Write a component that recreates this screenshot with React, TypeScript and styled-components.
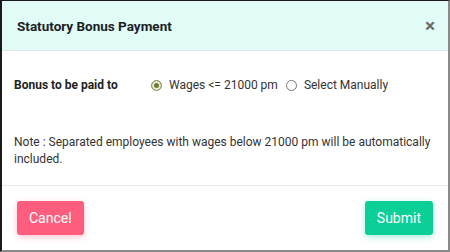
import styled, { createGlobalStyle } from "styled-components";

const GlobalStyle = createGlobalStyle`
  html, body {
    margin: 0;
    padding: 0;
    background: #fff;
  }
  body {
    font-family: Roboto, "Liberation Sans", sans-serif;
  }
`;

const Modal = styled.div`
  width: 450px;
  height: 252px;
  box-sizing: border-box;
  border-top: 1px solid #1a1a1a;
  border-left: 2px solid #1a1a1a;
  border-right: 2px solid #8a8a8a;
  border-bottom: 2px solid #8a8a8a;
  display: flex;
  flex-direction: column;
  background: #fff;
`;

const Header = styled.div`
  height: 50px;
  box-sizing: border-box;
  background: #e1fbf7;
  border-bottom: 1px solid #e3e6e8;
  display: flex;
  align-items: center;
  justify-content: space-between;
  padding: 0 13px 0 15px;
`;

const Title = styled.h4`
  margin: 0;
  font-size: 13.5px;
  font-weight: 700;
  color: #1c2126;
`;

const Close = styled.span`
  font-size: 19px;
  font-weight: 700;
  color: #6c6c6c;
  line-height: 1;
`;

const Body = styled.div`
  flex: 1;
  padding: 25px 12px 0;
  border-bottom: 1px solid #e6e8ea;
  color: #333;
  font-size: 12px;
`;

const Row = styled.div`
  display: flex;
  align-items: center;
  height: 18px;
`;

const Label = styled.span`
  width: 137px;
  font-weight: 700;
  color: #222;
`;

const Option = styled.label`
  display: flex;
  align-items: center;
  gap: 7px;
  margin-right: 8px;
  color: #333;
`;

const RadioDot = styled.span<{ $checked?: boolean }>`
  width: 11px;
  height: 11px;
  box-sizing: border-box;
  border-radius: 50%;
  border: 1px solid ${(p) => (p.$checked ? "#8a9560" : "#777")};
  background: ${(p) => (p.$checked ? "#6d7d34" : "#fff")};
  box-shadow: ${(p) => (p.$checked ? "inset 0 0 0 2px #e9edd8" : "none")};
`;

const Note = styled.p`
  margin: 40px 0 0;
  line-height: 17px;
`;

const Footer = styled.div`
  height: 64px;
  display: flex;
  align-items: center;
  justify-content: space-between;
  padding: 0 15px;
`;

const Button = styled.button<{ $tone: "danger" | "success" }>`
  height: 34px;
  padding: 0 12px;
  border: none;
  border-radius: 3px;
  font-family: Roboto, "Liberation Sans", sans-serif;
  font-size: 14px;
  color: #fff;
  background: ${(p) => (p.$tone === "danger" ? "#fe5d7e" : "#0acf97")};
  box-shadow: 0 2px 6px
    ${(p) => (p.$tone === "danger" ? "rgba(254,93,126,0.35)" : "rgba(10,207,151,0.35)")};
`;

const App = () => {
  return (
    <>
      <GlobalStyle />
      <Modal>
        <Header>
          <Title>Statutory Bonus Payment</Title>
          <Close>×</Close>
        </Header>
        <Body>
          <Row>
            <Label>Bonus to be paid to</Label>
            <Option>
              <RadioDot $checked />
              Wages &lt;= 21000 pm
            </Option>
            <Option>
              <RadioDot />
              Select Manually
            </Option>
          </Row>
          <Note>
            Note : Separated employees with wages below 21000 pm will be automatically
            included.
          </Note>
        </Body>
        <Footer>
          <Button $tone="danger">Cancel</Button>
          <Button $tone="success">Submit</Button>
        </Footer>
      </Modal>
    </>
  );
};

export default App;
